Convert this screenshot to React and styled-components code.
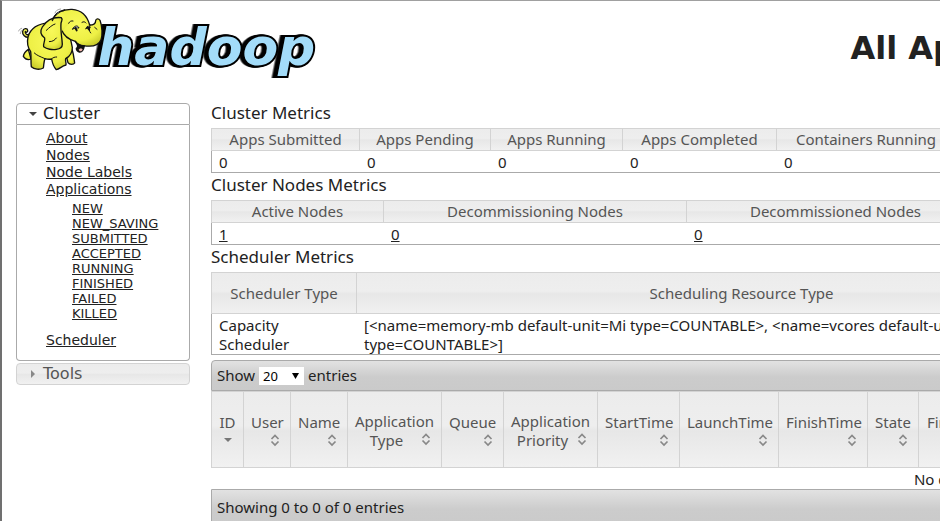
import React, {useState} from 'react'
import styled, {createGlobalStyle, css} from 'styled-components'

const appStates = ["NEW", "NEW_SAVING", "SUBMITTED", "ACCEPTED", "RUNNING", "FINISHED", "FAILED", "KILLED"];

const clusterMetrics = [
    {name: "Apps Submitted", value: "0", width: 149},
    {name: "Apps Pending", value: "0", width: 131},
    {name: "Apps Running", value: "0", width: 132},
    {name: "Apps Completed", value: "0", width: 154},
    {name: "Containers Running", value: "0", width: 179},
    {name: "", value: ""},
];

const nodeMetrics = [
    {name: "Active Nodes", value: "1", width: 173},
    {name: "Decommissioning Nodes", value: "0", width: 303},
    {name: "Decommissioned Nodes", value: "0", width: 298},
    {name: "", value: ""},
];

const appColumns = [
    {name: "ID", width: 33, sorted: true},
    {name: "User", width: 47},
    {name: "Name", width: 57},
    {name: "Application Type", width: 94},
    {name: "Queue", width: 62},
    {name: "Application Priority", width: 94},
    {name: "StartTime", width: 82},
    {name: "LaunchTime", width: 99},
    {name: "FinishTime", width: 89},
    {name: "State", width: 51},
    {name: "FinalStatus", width: 94},
    {name: ""},
];

function Columns({columns}) {
    return (
        <colgroup>
            {columns.map((column, i) => <Col key={i} $width={column.width} />)}
        </colgroup>
    )
}

function Metrics({title, columns, linked}) {
    return (
        <section>
            <SectionTitle>{title}</SectionTitle>
            <Table>
                <Columns columns={columns} />
                <thead>
                    <tr>{columns.map((column, i) => <Th key={i}>{column.name}</Th>)}</tr>
                </thead>
                <tbody>
                    <tr>
                        {columns.map((column, i) => (
                            <Td key={i}>
                                {linked && column.value ? <Link href="#nodes">{column.value}</Link> : column.value}
                            </Td>
                        ))}
                    </tr>
                </tbody>
            </Table>
        </section>
    )
}

function SortIcon({sorted}) {
    return (
        <Icon viewBox="0 0 16 16" aria-hidden="true">
            {sorted
                ? <path d="M4 6h8l-4 4z" fill="#777" />
                : <path d="M4.5 7 8 3.5 11.5 7M4.5 9.500 8 13 11.500 9.500" fill="none" stroke="#888" strokeWidth="1.7" />}
        </Icon>
    )
}

function Logo() {
    return (
        <LogoDrawing viewBox="48 18 906 228" role="img" aria-label="hadoop">
            <defs>
                <radialGradient id="skin" cx="0.5" cy="0.4" r="0.65">
                    <stop offset="0" stopColor="#f8f95a" />
                    <stop offset="0.7" stopColor="#eef046" />
                    <stop offset="1" stopColor="#c9cc2c" />
                </radialGradient>
            </defs>
            <Lettering x="292" y="196">hadoop</Lettering>
            <g stroke="#111" strokeWidth="4" strokeLinejoin="round" strokeLinecap="round" fill="url(#skin)">
                <path d="M86 112C76 113 66 104 68 94C70 84 82 84 83 91C84 97 77 99 76 94C74 102 82 107 88 102" />
                <path d="M198 165L204 188C209 195 221 194 224 189C222 178 222 166 216 148Z" />
                <path d="M85 148C76 154 71 161 70 169C76 178 84 181 93 177Z" />
                <path d="M150 68C119 70 92 82 84 111C80 130 84 144 92 155C94 170 92 187 94 200C103 209 119 210 130 204C132 193 131 185 135 176C142 178 149 178 155 177C157 189 161 201 169 209C179 207 185 198 198 195C199 187 195 182 197 176C211 168 217 158 217 143L205 85Z" />
                <path d="M157 62C164 39 187 27 216 28C243 30 261 45 269 75C278 75 287 71 287 62C288 55 296 55 300 61C307 80 308 106 303 119C296 137 274 141 250 137C238 137 230 132 226 124C205 119 191 107 184 88Z" />
                <path d="M157 62C163 46 173 37 186 32L207 70L184 95Z" stroke="none" />
                <path d="M184 53C158 50 139 62 127 81C119 94 123 106 134 114C136 125 128 133 131 140C140 147 157 151 169 148C182 147 187 142 187 133C186 112 181 92 183 70C184 62 190 59 184 53Z" />
                <path d="M226 124C235 135 245 137 253 138C251 149 246 157 238 156C231 154 229 150 229 145C235 143 234 132 226 124Z" fill="#111" />
                <path d="M236 149C240 143 247 145 248 149C245 154 240 156 236 149Z" fill="#f3b7b0" stroke="none" />
                <path d="M218 87C223 76 234 75 237 84C231 83 225 84 218 87ZM258 86C260 78 266 76 271 83C266 82 262 83 258 86Z" fill="#fff" strokeWidth="3" />
                <path d="M226 84L230 91M263 82L267 88" strokeWidth="6" />
                <path d="M157 62C163 43 177 34 194 30" fill="none" />
                <path d="M206 70C209 63 214 62 219 63M246 67C251 64 255 65 258 69M270 76C267 87 267 94 272 99M284 82L291 88M139 91C148 83 157 74 165 72M148 125C160 125 165 119 169 114M103 159C110 166 121 170 135 176M155 177C159 172 164 171 170 171M198 176L205 171" fill="none" strokeWidth="3" />
                <path d="M56 93C58 88 61 86 65 85M61 101L64 92M165 39C168 31 173 28 182 27M171 43L176 37" fill="none" stroke="#777" strokeWidth="2" />
            </g>
        </LogoDrawing>
    )
}

export default function App() {
    const [showCluster, toggleCluster] = useState(true);
    const [showTools, toggleTools] = useState(false);
    const [length, setLength] = useState("20");

    return (
        <Page>
            <GlobalStyle />
            <Header>
                <LogoLink href="#home"><Logo /></LogoLink>
                <PageTitle>All Applications</PageTitle>
            </Header>
            <Body>
                <Sidebar>
                    <MenuTitle>
                        <MenuButton $open={showCluster} onClick={() => toggleCluster(!showCluster)}>
                            <SortArrow viewBox="0 0 16 16" $open={showCluster}><path d="M4 6h8l-4 4z" /></SortArrow>
                            Cluster
                        </MenuButton>
                    </MenuTitle>
                    {showCluster && (
                        <MenuList>
                            <li><Link href="#about">About</Link></li>
                            <li><Link href="#nodes">Nodes</Link></li>
                            <li><Link href="#labels">Node Labels</Link></li>
                            <li>
                                <Link href="#apps">Applications</Link>
                                <SubList>
                                    {appStates.map(state => (
                                        <li key={state}><Link href={"#" + state}>{state}</Link></li>
                                    ))}
                                </SubList>
                            </li>
                            <li><Link href="#scheduler">Scheduler</Link></li>
                        </MenuList>
                    )}
                    <MenuTitle>
                        <MenuButton $open={showTools} onClick={() => toggleTools(!showTools)}>
                            <SortArrow viewBox="0 0 16 16" $open={showTools}><path d="M4 6h8l-4 4z" /></SortArrow>
                            Tools
                        </MenuButton>
                    </MenuTitle>
                </Sidebar>
                <Content>
                    <Metrics title="Cluster Metrics" columns={clusterMetrics} />
                    <Metrics title="Cluster Nodes Metrics" columns={nodeMetrics} linked />
                    <section>
                        <SectionTitle>Scheduler Metrics</SectionTitle>
                        <Table>
                            <Columns columns={[{width: 146}, {width: 770}, {}]} />
                            <thead>
                                <tr>
                                    <Th $height={42}>Scheduler Type</Th>
                                    <Th $height={42}>Scheduling Resource Type</Th>
                                    <Th $height={42} />
                                </tr>
                            </thead>
                            <tbody>
                                <tr>
                                    <Td>Capacity Scheduler</Td>
                                    <Td>
                                        [&lt;name=memory-mb default-unit=Mi type=COUNTABLE&gt;, &lt;name=vcores default-unit=
                                        <br />
                                        type=COUNTABLE&gt;]
                                    </Td>
                                    <Td />
                                </tr>
                            </tbody>
                        </Table>
                    </section>
                    <Toolbar>
                        <label htmlFor="length">Show</label>
                        <SelectBox>
                            <Select id="length" value={length} onChange={e => setLength(e.target.value)}>
                                <option>20</option>
                                <option>50</option>
                                <option>100</option>
                            </Select>
                            <SelectArrow viewBox="0 0 8 8"><path d="M0 1h8L4 8z" /></SelectArrow>
                        </SelectBox>
                        <span>entries</span>
                    </Toolbar>
                    <Table>
                        <Columns columns={appColumns} />
                        <thead>
                            <tr>
                                {appColumns.map((column, i) => (
                                    <Th key={i} $height={77}>
                                        {column.name && (
                                            <SortButton>
                                                {column.name}
                                                <SortIcon sorted={column.sorted} />
                                            </SortButton>
                                        )}
                                    </Th>
                                ))}
                            </tr>
                        </thead>
                        <tbody>
                            <tr><EmptyTd colSpan={appColumns.length}>No data available in table</EmptyTd></tr>
                        </tbody>
                    </Table>
                    <Toolbar $footer>Showing 0 to 0 of 0 entries</Toolbar>
                </Content>
            </Body>
        </Page>
    )
}


const GlobalStyle = createGlobalStyle`
    * { box-sizing: border-box; }
    html { scrollbar-width: none; }
    body {
        margin: 0;
        overflow-x: hidden;
        background: #fff;
        color: #222;
        font-family: "DejaVu Sans", Verdana, sans-serif;
    }
    button, select { font-family: inherit; color: inherit; }
`
const glass = css`
    background: linear-gradient(#ececec, #eeeeee 45%, #e7e7e7 52%, #f1f1f1);
`
const Page = styled.div`
    min-height: 100vh;
    overflow: hidden;
    border-top: 1px solid #a0a0a0;
    border-left: 2px solid #707070;
    padding-left: 14px;
`
const Header = styled.header`
    display: grid;
    grid-template-columns: 174px minmax(1584px, 1fr);
    column-gap: 21px;
    height: 100px;
`
const LogoLink = styled.a`
    display: block;
    padding-top: 5px;
`
const LogoDrawing = styled.svg`
    display: block;
    width: 302px;
    height: 76px;
    overflow: visible;
`
const Lettering = styled.text`
    font: italic bold 156px "DejaVu Sans", Verdana, sans-serif;
    fill: #a3dcf9;
    stroke: #000;
    stroke-width: 12px;
    stroke-linejoin: miter;
    stroke-miterlimit: 3;
    paint-order: stroke;
    filter: drop-shadow(-5px 0 0 #000) drop-shadow(-5px 0 0 #000);
`
const PageTitle = styled.h1`
    margin: 0;
    padding: 28px 24px 0 0;
    font-size: 32px;
    line-height: 38px;
    text-align: center;
`
const Body = styled.div`
    display: grid;
    grid-template-columns: 174px minmax(1584px, 1fr);
    column-gap: 21px;
`
const Sidebar = styled.nav`
    padding-top: 2px;
`
const MenuTitle = styled.h3`
    margin: 0;
    font-weight: normal;
`
const MenuButton = styled.button`
    display: flex;
    align-items: center;
    gap: 2px;
    width: 100%;
    height: 22px;
    padding: 0 8px;
    border: 1px solid ${props => props.$open ? "#aaa" : "#d3d3d3"};
    border-radius: ${props => props.$open ? "4px 4px 0 0" : "4px"};
    font-size: 16px;
    line-height: 20px;
    ${props => props.$open ? "background: #fff;" : glass}
    color: ${props => props.$open ? "#222" : "#555"};
`
const SortArrow = styled.svg`
    width: 16px;
    height: 16px;
    fill: ${props => props.$open ? "#444" : "#888"};
    transform: ${props => props.$open ? "none" : "rotate(-90deg)"};
`
const MenuList = styled.ul`
    margin: 0 0 2px;
    padding: 5px 0 11px 29px;
    list-style: none;
    border: 1px solid #aaa;
    border-top: 0;
    border-radius: 0 0 4px 4px;
    font-size: 14px;
    line-height: 17px;
`
const SubList = styled.ul`
    margin: 3px 0 11px;
    padding-left: 26px;
    list-style: none;
    font-size: 13px;
    line-height: 15px;
`
const Link = styled.a`
    color: inherit;
    text-decoration: underline;
`
const Content = styled.main`
    font-family: "Noto Sans", sans-serif;
    font-size: 15px;
    line-height: 19px;
`
const SectionTitle = styled.h2`
    margin: 0;
    padding-bottom: 3px;
    font-size: 17px;
    font-weight: normal;
    line-height: 24px;
`
const Table = styled.table`
    width: 100%;
    table-layout: fixed;
    border-collapse: separate;
    border-spacing: 0;
`
const Col = styled.col`
    width: ${props => props.$width ? props.$width + "px" : "auto"};
`
const Th = styled.th`
    height: ${props => props.$height || 23}px;
    padding: 0 7px;
    border: 1px solid #d3d3d3;
    border-left-width: 0;
    ${glass}
    color: #555;
    font-weight: normal;
    &:first-child { border-left-width: 1px; }
`
const Td = styled.td`
    padding: 2px 7px 0;
    border-bottom: 1px solid #aaa;
    vertical-align: top;
    &:first-child { border-left: 1px solid #aaa; }
`
const EmptyTd = styled.td`
    height: 21px;
    padding: 2px 0 0;
    text-align: center;
    line-height: 19px;
`
const Toolbar = styled.div`
    display: flex;
    align-items: center;
    gap: 4px;
    height: ${props => props.$footer ? 37 : 31}px;
    margin-top: ${props => props.$footer ? 0 : 5}px;
    padding: 0 5px;
    border: 1px solid #aaa;
    border-radius: ${props => props.$footer ? "0 0 4px 4px" : "4px 4px 0 0"};
    background: linear-gradient(#e2e2e2, #cccccc 55%, #cacaca);
`
const SelectBox = styled.span`
    position: relative;
    display: flex;
`
const Select = styled.select`
    appearance: none;
    width: 45px;
    height: 18px;
    padding: 0 4px;
    border: 0;
    border-radius: 0;
    background: #fff;
    color: #000;
    font-size: 13px;
`
const SelectArrow = styled.svg`
    position: absolute;
    top: 5px;
    right: 5px;
    width: 7px;
    height: 7px;
    pointer-events: none;
`
const SortButton = styled.button`
    display: flow-root;
    width: 100%;
    padding: 2px 0 0;
    border: 0;
    background: none;
    font-size: 15px;
    line-height: 19px;
    text-align: center;
`
const Icon = styled.svg`
    float: right;
    width: 16px;
    height: 16px;
`
